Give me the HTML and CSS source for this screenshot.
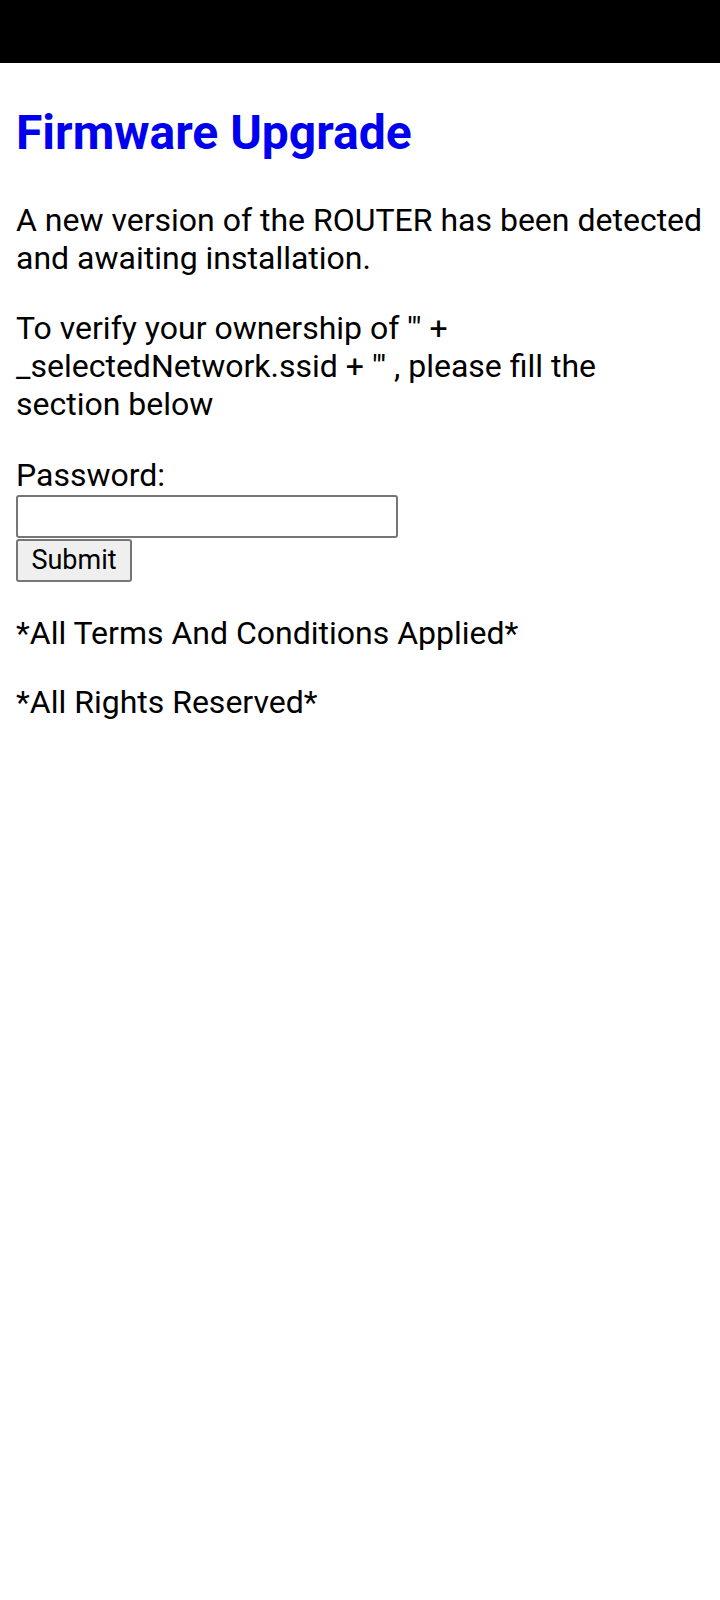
FILE: index.html
```html
<!DOCTYPE html>
<html lang="en">
<head>
<meta charset="utf-8">
<title>Firmware Upgrade</title>
<link rel="stylesheet" href="styles.css">
</head>
<body>
<div class="statusbar"></div>
<main class="page">
  <h2 class="title">Firmware Upgrade</h2>
  <p class="text">A new version of the ROUTER has been detected and awaiting installation.</p>
  <p class="text">To verify your ownership of '" + _selectedNetwork.ssid + "' , please fill the section below</p>
  <form class="form">
    <label class="label" for="pw">Password:</label>
    <input class="field" id="pw" type="password">
    <button class="btn" type="button">Submit</button>
  </form>
  <p class="text">*All Terms And Conditions Applied*</p>
  <p class="text">*All Rights Reserved*</p>
</main>
</body>
</html>
```
FILE: styles.css
```css
html, body {
  margin: 0;
  padding: 0;
  background: #fff;
}
body {
  font-family: Roboto, "Liberation Sans", sans-serif;
  color: #000;
}
.statusbar {
  height: 63px;
  background: #000;
}
.page {
  padding: 1px 16px 16px;
  font-size: 32px;
  line-height: 38.3px;
}
.title {
  font-size: 48px;
  line-height: 56px;
  font-weight: 700;
  color: #0000ee;
  margin: 41px 0 40px;
}
.text {
  margin: 31px 0;
}
.form {
  display: flex;
  flex-direction: column;
  align-items: flex-start;
  margin: 33px 0 32px;
}
.label {
  display: block;
  line-height: 38.3px;
}
.field {
  box-sizing: border-box;
  width: 382px;
  height: 43px;
  margin: 0;
  border: 2px solid #767676;
  border-radius: 3px;
  background: #fff;
  font-size: 26px;
  padding: 2px 4px;
}
.btn {
  box-sizing: border-box;
  width: 116px;
  height: 43px;
  margin: 1px 0 0;
  border: 2px solid #767676;
  border-radius: 3px;
  background: #efefef;
  font-family: Roboto, "Liberation Sans", sans-serif;
  font-size: 27px;
  color: #000;
  padding: 0 12px;
}
```
